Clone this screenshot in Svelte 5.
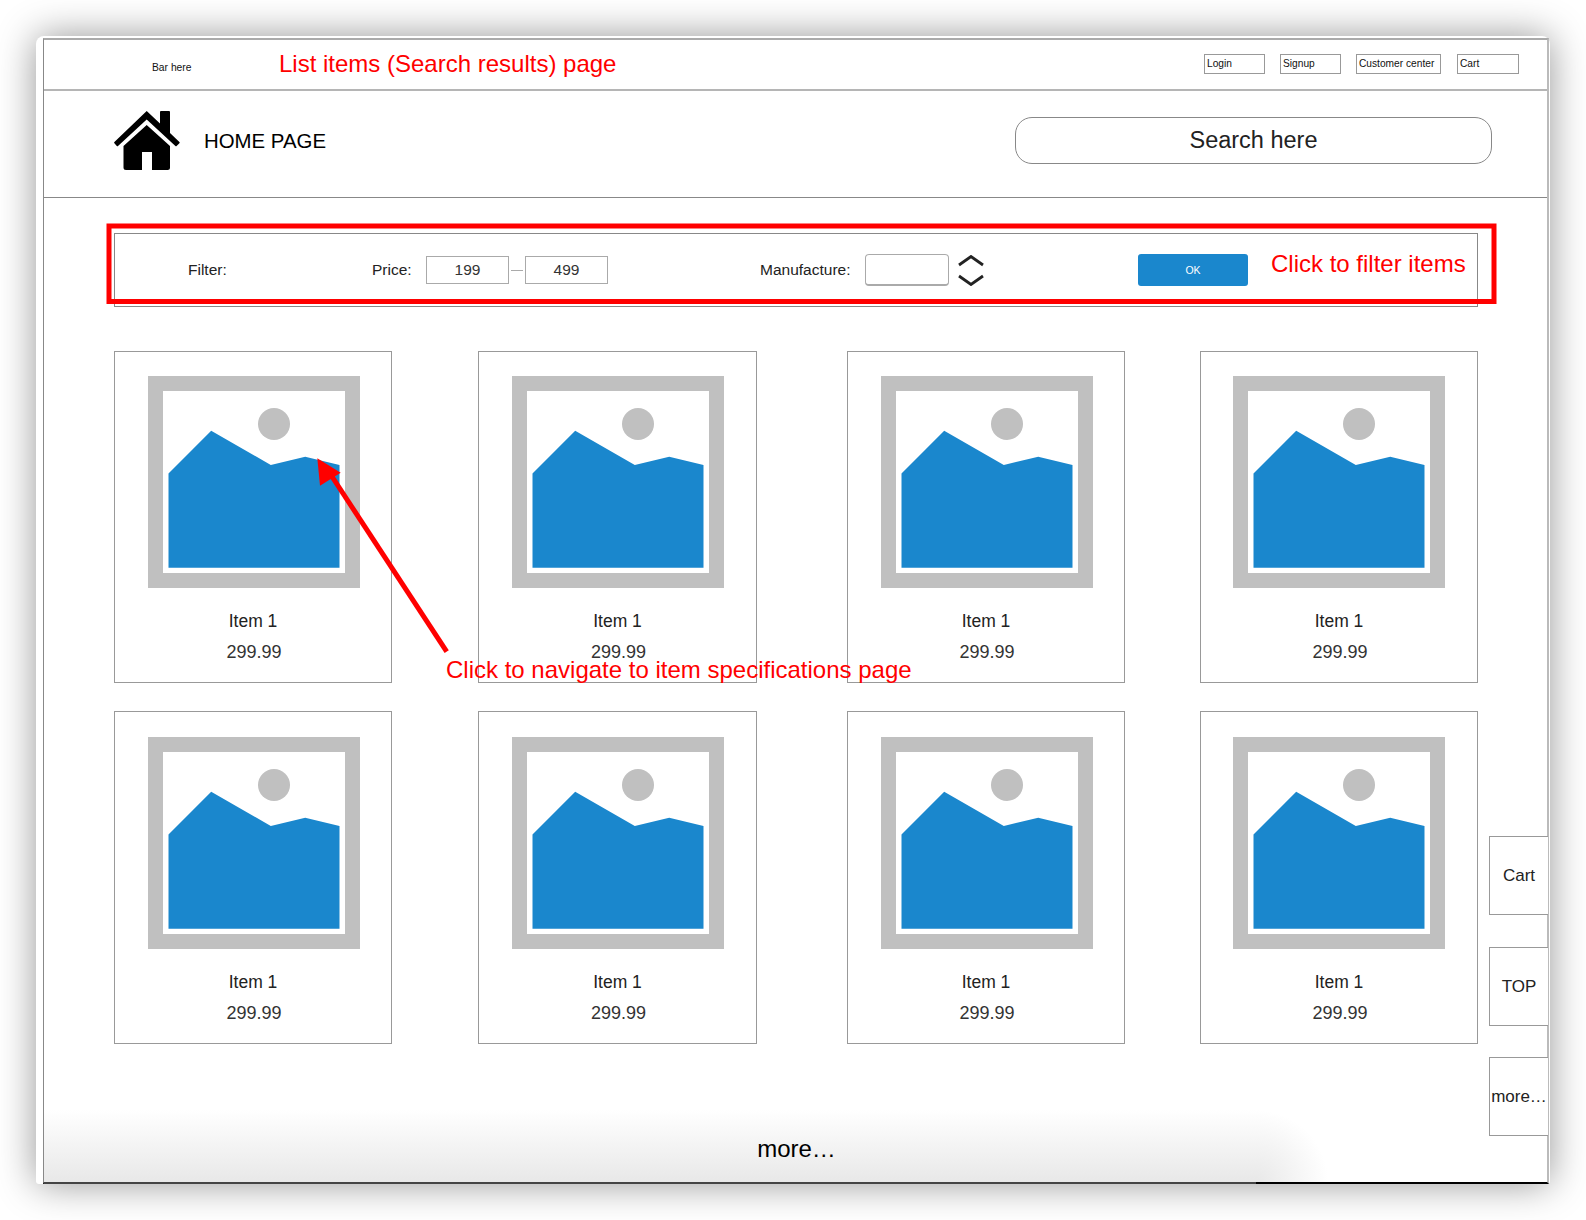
<script>
  const navLinks = [
    { label: 'Login', cls: 'w61' },
    { label: 'Signup', cls: 'w61' },
    { label: 'Customer center', cls: 'w85' },
    { label: 'Cart', cls: 'w62' }
  ];
  const items = Array.from({ length: 8 }, () => ({ name: 'Item 1', price: '299.99' }));
  const sideLinks = [
    { label: 'Cart', top: 836 },
    { label: 'TOP', top: 947 },
    { label: 'more…', top: 1057 }
  ];
</script>

<div class="page">
  <div class="window">
    <div class="frame">
      <header class="topbar">
        <span class="bar-note">Bar here</span>
        <span class="title note">List items (Search results) page</span>
        <nav class="top-nav">
          {#each navLinks as link}
            <div class="top-link {link.cls}">{link.label}</div>
          {/each}
        </nav>
      </header>

      <div class="masthead">
        <svg class="home-icon" viewBox="0 0 66 59" width="66" height="59" aria-hidden="true">
          <path d="M32.7 0 L46 12.5 V1 Q46 0 47 0 H55 Q56 0 56 1 V22 L65.4 31 Q66 31.6 65.4 32.2 L62.6 35 Q62 35.5 61.4 35 L32.7 8.5 L4 35 Q3.4 35.5 2.8 35 L0.4 32.2 Q-0.2 31.6 0.4 31 Z" fill="#000" />
          <path fill-rule="evenodd" d="M32.7 14 L56 35 V56.5 Q56 59 53.5 59 H12 Q9.5 59 9.5 56.5 V35 Z M28 41 V59 H38 V41 Z" fill="#000" />
        </svg>
        <span class="home-label">HOME PAGE</span>
        <div class="search">Search here</div>
      </div>

      <main class="content">
        <section class="filter">
          <span class="f-title">Filter:</span>
          <span class="f-price">Price:</span>
          <div class="f-input">199</div>
          <span class="f-dash"></span>
          <div class="f-input">499</div>
          <span class="f-manu">Manufacture:</span>
          <div class="f-select"></div>
          <svg class="f-arrows" viewBox="0 0 26 31" width="26" height="31" aria-hidden="true">
            <path d="M1 10 L13 1.5 L25 10" fill="none" stroke="#222" stroke-width="2.8" />
            <path d="M1 21 L13 29.5 L25 21" fill="none" stroke="#222" stroke-width="2.8" />
          </svg>
          <div class="f-ok">OK</div>
        </section>

        <div class="grid">
          {#each items as item}
            <article class="card">
              <svg class="thumb" viewBox="0 0 212 212" width="212" height="212" aria-hidden="true">
                <rect width="212" height="212" fill="#c0c0c0" />
                <rect x="15" y="15" width="182" height="182" fill="#fff" />
                <circle cx="126" cy="48" r="16" fill="#c0c0c0" />
                <path d="M20.5 97.5 L63.2 54.7 L122.8 89 L157.2 80.7 L191.5 89 V191.7 H20.5 Z" fill="#1a87cd" />
              </svg>
              <div class="name">{item.name}</div>
              <div class="price">{item.price}</div>
            </article>
          {/each}
        </div>

        <div class="more">more…</div>
      </main>

      <div class="fade"></div>
    </div>
  </div>

  {#each sideLinks as link}
    <div class="side-link" style="top: {link.top}px">{link.label}</div>
  {/each}

  <!-- annotations drawn on top of the wireframe -->
  <svg class="marks" viewBox="0 0 1586 1220" width="1586" height="1220" aria-hidden="true">
    <rect x="109" y="226" width="1385" height="75.5" fill="none" stroke="#f00" stroke-width="5" />
    <path d="M446.7 651.7 L329 472" fill="none" stroke="#f00" stroke-width="5" />
    <path d="M317.3 458.3 L340.7 472.7 L320 485.7 Z" fill="#f00" />
  </svg>
  <span class="note filter-note">Click to filter items</span>
  <span class="note item-note">Click to navigate to item specifications page</span>
</div>

<style>
  :global(body) {
    margin: 0;
    background: #fff;
  }

  .page {
    position: relative;
    width: 1586px;
    height: 1220px;
    padding: 36px 36px 0;
    box-sizing: border-box;
    overflow: hidden;
    font-family: 'Liberation Sans', Arial, sans-serif;
  }

  .window {
    box-sizing: border-box;
    width: 1514px;
    height: 1148px;
    padding: 2px 1px 0 7px;
    background: #fff;
    border-radius: 8px 8px 3px 3px;
    box-shadow: 0 0 38px rgba(0, 0, 0, 0.42);
  }

  .frame {
    position: relative;
    box-sizing: border-box;
    height: 100%;
    border-top: 2px solid #aaa;
    border-left: 1px solid #888;
    border-right: 2px solid #bbb;
    border-bottom: 2px solid #000;
  }

  .note {
    color: #f00;
    font-size: 24px;
    white-space: nowrap;
  }

  .topbar {
    box-sizing: border-box;
    display: flex;
    align-items: center;
    height: 51px;
    padding: 0 28px 2px 108px;
    border-bottom: 2px solid #b5b5b5;
  }

  .bar-note {
    margin-top: 7px;
    width: 39px;
    font-size: 10.3px;
    color: #111;
    white-space: nowrap;
  }

  .title {
    margin-left: 88px;
  }

  .top-nav {
    display: flex;
    gap: 15px;
    margin-left: auto;
  }

  .top-link {
    box-sizing: border-box;
    height: 20px;
    padding-left: 2px;
    border: 1px solid #999;
    font-size: 10.2px;
    line-height: 18px;
    color: #111;
    white-space: nowrap;
  }

  .top-link:last-child {
    margin-left: 1px;
  }

  .w61 {
    width: 61px;
  }

  .w62 {
    width: 62px;
  }

  .w85 {
    width: 85px;
  }

  .masthead {
    box-sizing: border-box;
    display: flex;
    align-items: center;
    height: 107px;
    padding: 0 55px 7px 70px;
    border-bottom: 1px solid #888;
  }

  .home-label {
    margin-top: 1px;
    margin-left: 24px;
    font-size: 20.4px;
    color: #000;
  }

  .search {
    box-sizing: border-box;
    width: 477px;
    height: 47px;
    margin-left: auto;
    border: 1px solid #888;
    border-radius: 17px;
    font-size: 23.5px;
    line-height: 44px;
    text-align: center;
    color: #222;
  }

  .content {
    padding: 35px 0 0 70px;
  }

  .filter {
    box-sizing: border-box;
    display: flex;
    align-items: center;
    width: 1364px;
    height: 74px;
    padding-left: 73px;
    border: 1px solid #888;
    font-size: 15.5px;
    color: #222;
  }

  .f-title {
    width: 184px;
  }

  .f-price {
    width: 54px;
  }

  .f-input {
    box-sizing: border-box;
    width: 83px;
    height: 28px;
    border: 1px solid #aaa;
    line-height: 25px;
    text-align: center;
    color: #333;
  }

  .f-dash {
    width: 12px;
    height: 1px;
    margin: 0 2px;
    background: #aaa;
  }

  .f-manu {
    width: 105px;
    margin-left: 152px;
  }

  .f-select {
    box-sizing: border-box;
    width: 84px;
    height: 32px;
    border: 1px solid #aaa;
    border-bottom-width: 2px;
    border-radius: 4px;
  }

  .f-arrows {
    margin-left: 9px;
  }

  .f-ok {
    width: 110px;
    height: 32px;
    margin-left: 154px;
    border-radius: 3px;
    background: #1a87cd;
    color: #fff;
    font-size: 10.5px;
    line-height: 33px;
    text-align: center;
  }

  .grid {
    display: grid;
    grid-template-columns: 364px 369px 353px 278px;
    row-gap: 28px;
    margin-top: 44px;
  }

  .card {
    box-sizing: border-box;
    display: flex;
    flex-direction: column;
    align-items: center;
    width: 278px;
    height: 332px;
    padding-top: 24px;
    border: 1px solid #999;
  }

  .grid .card:nth-child(n + 5) {
    height: 333px;
    padding-top: 25px;
  }

  .grid .card:nth-child(4n + 2) {
    width: 279px;
  }

  .grid .card:nth-child(odd) .thumb {
    margin-left: 1px;
  }

  .thumb {
    display: block;
  }

  .name {
    margin-top: 23px;
    font-size: 17.5px;
    line-height: 20px;
    color: #222;
  }

  .price {
    margin-top: 11px;
    margin-left: 2px;
    font-size: 18px;
    line-height: 20px;
    color: #333;
  }

  .more {
    position: relative;
    z-index: 1;
    margin-top: 91px;
    padding-right: 68px;
    font-size: 24px;
    line-height: 28px;
    text-align: center;
    color: #000;
  }

  /* shaded strip along the bottom edge, ends in a soft quarter circle */
  .fade {
    position: absolute;
    left: 0;
    bottom: -2px;
    width: 1212px;
    height: 72px;
    border-bottom: 2px solid #444;
    background: linear-gradient(to bottom, rgba(232, 232, 232, 0), rgba(232, 232, 232, 1));
    pointer-events: none;
  }

  .fade::after {
    content: '';
    position: absolute;
    left: 100%;
    bottom: 0;
    width: 72px;
    height: 72px;
    background: radial-gradient(circle at bottom left, rgba(232, 232, 232, 1), rgba(232, 232, 232, 0) 72px);
  }

  .side-link {
    position: absolute;
    left: 1489px;
    box-sizing: border-box;
    width: 59px;
    height: 79px;
    border: 1px solid #999;
    border-right: none;
    background: #fff;
    font-size: 17px;
    line-height: 77px;
    text-align: center;
    color: #222;
    white-space: nowrap;
  }

  .marks {
    position: absolute;
    left: 0;
    top: 0;
    pointer-events: none;
  }

  .filter-note {
    position: absolute;
    left: 1271px;
    top: 250px;
  }

  .item-note {
    position: absolute;
    left: 446px;
    top: 656px;
  }
</style>
